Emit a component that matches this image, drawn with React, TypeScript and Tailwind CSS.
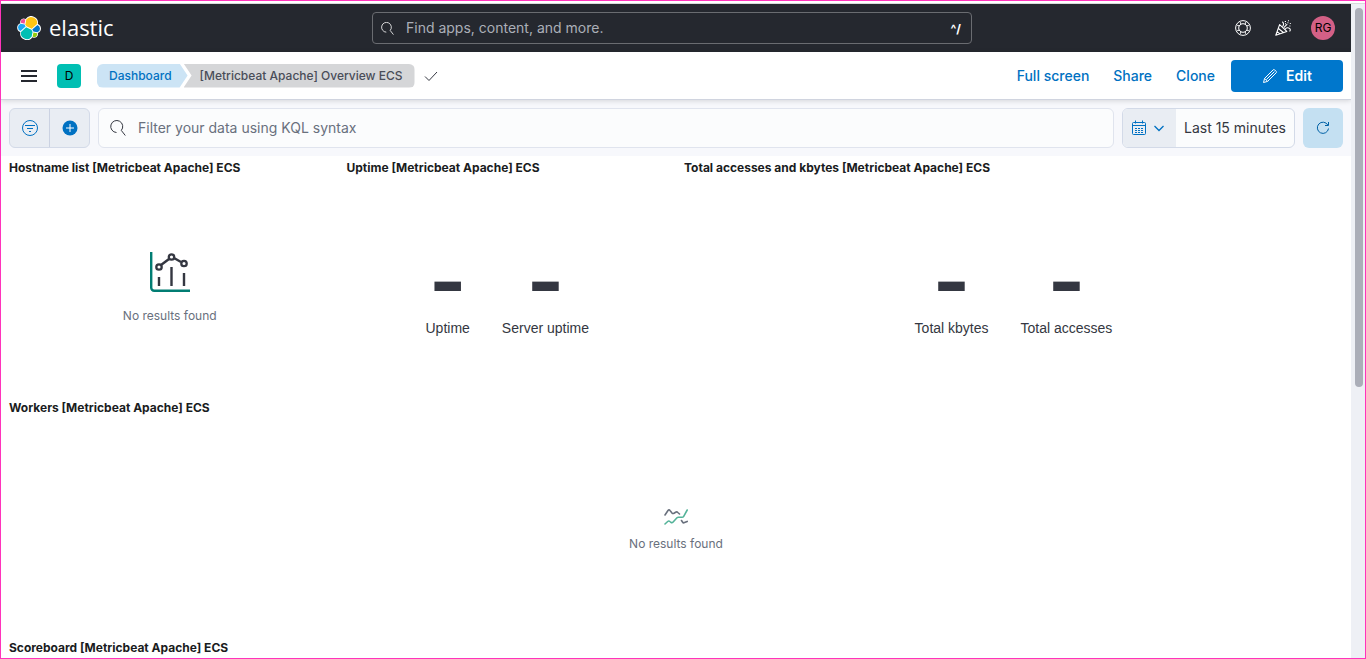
import type { ReactNode, SVGProps } from 'react';

function Icon({ children, ...rest }: SVGProps<SVGSVGElement> & { children: ReactNode }) {
  return (
    <svg width="16" height="16" viewBox="0 0 16 16" fill="none" stroke="currentColor" aria-hidden="true" {...rest}>
      {children}
    </svg>
  );
}

function SearchIcon({ size = 16 }: { size?: number }) {
  return (
    <Icon width={size} height={size}>
      <path d="M6.5 12.5A6 6 0 1 1 11.3 10.400L15.300 15.500" />
    </Icon>
  );
}

function ElasticMark() {
  return (
    <svg width="24" height="24" viewBox="0 0 32 32" aria-hidden="true">
      <path fill="#FFF" d="M32 16.77c0-2.68-1.66-5.02-4.16-5.94a9.03 9.03 0 0 0-16.3-6.79 4.78 4.78 0 0 0-7.1 5.47A6.38 6.38 0 0 0 .2 15.5c0 2.7 1.67 5.04 4.18 5.96a9 9 0 0 0 16.27 6.78 4.78 4.78 0 0 0 7.09-5.47A6.4 6.4 0 0 0 32 16.77" />
      <path fill="#FEC514" d="m12.58 13.79 7 3.2 7.07-6.2a7.9 7.9 0 0 0-14.24-6l-1.18 6.1z" />
      <path fill="#00BFB3" d="M5.33 21.22a7.9 7.9 0 0 0 14.27 6.08l1.17-6.07-1.56-2.98-7.03-3.2z" />
      <path fill="#F04E98" d="m5.29 9.08 4.8 1.14 1.05-5.46a3.8 3.8 0 0 0-5.85 4.32" />
      <path fill="#1BA9F5" d="M4.87 10.23a5.3 5.3 0 0 0-.15 9.93l6.73-6.09-1.23-2.64z" />
      <path fill="#93C90E" d="M20.87 27.3a3.77 3.77 0 0 0 5.83-4.31l-4.79-1.12z" />
      <path fill="#0077CC" d="m21.85 20.56 5.27 1.24a5.3 5.3 0 0 0 .15-9.94l-6.9 6.04z" />
    </svg>
  );
}

function TopBar() {
  return (
    <header className="flex h-12 items-center bg-[#25282f] pr-6 pl-4">
      <a href="#home" className="flex flex-1 items-center gap-2 text-white">
        <ElasticMark />
        <span className="pb-0.5 font-['Open_Sans',sans-serif] text-[22px] leading-6">elastic</span>
      </a>
      <label className="flex h-8 w-[600px] items-center gap-3 rounded-[4px] border border-[#6a6c71] px-2 text-white">
        <SearchIcon size={13} />
        <input
          type="search"
          aria-label="Find apps, content, and more"
          placeholder="Find apps, content, and more."
          className="min-w-0 flex-1 bg-transparent text-sm outline-none placeholder:text-[#abafb8]"
        />
        <kbd className="pt-0.5 pr-0.5 font-['Inter',sans-serif] text-xs font-bold">^/</kbd>
      </label>
      <div className="flex flex-1 items-center justify-end gap-6 text-white">
        <button aria-label="Help">
          <Icon>
            <circle cx="8" cy="8" r="7.4" />
            <circle cx="8" cy="8" r="4.3" />
            <path d="M2.200 5.300 4.500 6M5.300 2.200 6 4.500M10.700 2.200 10 4.500M13.800 5.300l-2.300.7M2.200 10.700l2.300-.7M5.300 13.800l.7-2.300M10.700 13.800l-.7-2.300M13.800 10.700l-2.300-.7" />
          </Icon>
        </button>
        <button aria-label="What's new">
          <Icon strokeWidth="1.1">
            <path d="M4.600 4.600.8 15.200l11-3.800zM3.400 8.500l5 4M2.200 11.700l2.700 2.200" strokeLinejoin="round" />
            <path d="M7.400 6.600C9 5.200 9 3 7.200 1.800M10 9.600c.8-2 3-2.600 4.800-1 .8.8.6 2.200-.4 2.600M8.800 7.600l3.400-3.400" />
            <path d="M9.800 1.500H11M13 .8h1M14.800 3.500h1M12.400 2.800h1M14.400 6h1M10 3.800h1" />
          </Icon>
        </button>
        <button aria-label="Account menu" className="-mr-2 -ml-1 flex size-6 items-center justify-center rounded-full bg-[#d36086] text-xs text-black">
          RG
        </button>
      </div>
    </header>
  );
}

function NavBar() {
  return (
    <nav className="relative z-10 flex h-12 items-center border-b border-[#d0d4df] bg-white pr-2 pl-5 shadow-[0_1px_5px_rgba(0,0,0,0.14)]">
      <button aria-label="Toggle navigation" className="text-[#25282f]">
        <Icon strokeWidth="2">
          <path d="M0 3h16M0 8h16M0 13h16" />
        </Icon>
      </button>
      <button aria-label="Default space" className="ml-5 flex size-6 items-center justify-center rounded-[4px] bg-[#00bfb3] text-xs text-black">
        D
      </button>
      <ol className="ml-4 flex text-xs leading-6 font-medium">
        <li className="rounded-l-md bg-[#cce4f5] pr-4 pl-3 text-[#0071c2] [clip-path:polygon(0_0,calc(100%-8px)_0,100%_50%,calc(100%-8px)_100%,0_100%)]">
          <a href="#dashboards">Dashboard</a>
        </li>
        <li className="-ml-1 rounded-r-md bg-[#d5d6d8] pr-3 pl-4 text-[#494d58] [clip-path:polygon(0_0,100%_0,100%_100%,0_100%,8px_50%)]">
          [Metricbeat Apache] Overview ECS
        </li>
      </ol>
      <Icon className="ml-2 text-[#343741]">
        <path d="m2 8.5 4 4 8-8.5" />
      </Icon>
      <div className="ml-auto flex items-center gap-6 text-sm font-medium text-[#0071c2]">
        <a href="#full-screen">Full screen</a>
        <a href="#share">Share</a>
        <a href="#clone">Clone</a>
      </div>
      <button className="ml-4 flex h-8 w-28 items-center justify-center gap-2 rounded-[4px] bg-[#0077cc] text-sm font-semibold text-white">
        <Icon>
          <path d="M1.500 14.500 2.600 10.400 11.200 1.800a1 1 0 0 1 1.400 0l1.600 1.600a1 1 0 0 1 0 1.400L5.600 13.400zM2.600 10.400l3 3M4.400 11.600l8-8" />
        </Icon>
        Edit
      </button>
    </nav>
  );
}

function FilterBar() {
  return (
    <div className="flex gap-2 bg-[#f7f8fc] p-2">
      <div className="flex h-10 w-[81px] divide-x divide-[#cbd2e2] overflow-hidden rounded-md border border-[#d3dae8] bg-[#e9edf3] text-[#0071c2]">
        <button aria-label="Saved queries" className="flex flex-1 items-center justify-center">
          <Icon>
            <circle cx="8" cy="8" r="7.5" />
            <path d="M3 5.500h10M5 8.500h6M7 11.500h2" />
          </Icon>
        </button>
        <button aria-label="Add filter" className="flex flex-1 items-center justify-center">
          <Icon>
            <circle cx="8" cy="8" r="7.5" fill="currentColor" stroke="none" />
            <path d="M4 8h8M8 4v8" stroke="#fff" />
          </Icon>
        </button>
      </div>
      <label className="flex h-10 flex-1 items-center gap-3 rounded-md border border-[#e0e4ee] bg-[#fbfcfd] px-[11px] text-[#343741]">
        <SearchIcon />
        <input
          type="search"
          aria-label="Query"
          placeholder="Filter your data using KQL syntax"
          className="min-w-0 flex-1 bg-transparent text-sm outline-none placeholder:text-[#69707d]"
        />
      </label>
      <div className="flex h-10 overflow-hidden rounded-md border border-[#d3dae8] bg-[#fbfcfd]">
        <button aria-label="Date quick select" className="flex w-[53px] items-center justify-center gap-1 bg-[#e9edf3] text-[#0071c2]">
          <Icon>
            <rect x="1.5" y="2.5" width="13" height="12" rx="1" />
            <path d="M1.500 5.500h13M4.500.5v3M11.500.5v3" />
            <path d="M4 8.500h8M4 10.500h8M4 12.500h8" strokeDasharray="2 1" />
          </Icon>
          <Icon>
            <path d="m3.500 6 4.500 4.500L12.500 6" strokeWidth="1.3" />
          </Icon>
        </button>
        <button className="px-2 text-sm text-[#343741]">Last 15 minutes</button>
      </div>
      <button aria-label="Refresh" className="flex size-10 items-center justify-center rounded-md bg-[#c4e0f2] text-[#0061a6]">
        <Icon>
          <path d="M12.800 5A5.600 5.600 0 1 0 13.500 8.500M13.500 2v3.500H10" />
        </Icon>
      </button>
    </div>
  );
}

function Panel({ title, className = '', children }: { title: string; className?: string; children?: ReactNode }) {
  return (
    <section className={`flex h-60 flex-col ${className}`}>
      <h2 className="px-2 text-xs leading-6 font-bold text-[#1a1c21]">{title}</h2>
      <div className="flex flex-1 items-center justify-center">{children}</div>
    </section>
  );
}

function Metric({ label }: { label: string }) {
  return (
    <div className="flex flex-col items-center px-4 text-[#343741]">
      <span className="pt-1.5 text-[80px] leading-[74px] font-bold">-</span>
      <span className="font-['Liberation_Sans',sans-serif] text-sm">{label}</span>
    </div>
  );
}

function BarsIcon() {
  return (
    <svg width="40" height="40" viewBox="0 0 40 40" fill="none" stroke="#343741" strokeWidth="2" aria-hidden="true">
      <path stroke="#017d73" strokeWidth="2.4" d="M1.200 0v35.800a3 3 0 0 0 3 3H40" />
      <path d="M9 25v9M21.500 15v19M34 21v13M11 13l8-6M24 6l7 4" strokeWidth="2.4" />
      <circle cx="9" cy="15" r="2.7" strokeWidth="2.3" />
      <circle cx="21.500" cy="5" r="2.7" strokeWidth="2.3" />
      <circle cx="34" cy="11.500" r="2.7" strokeWidth="2.3" />
    </svg>
  );
}

function LinesIcon() {
  return (
    <svg width="24" height="18" viewBox="0 0 24 18" fill="none" strokeWidth="1.6" strokeLinecap="round" strokeLinejoin="round" aria-hidden="true">
      <path stroke="#69707d" d="M1 7 4 2.500c.6-.8 1.400-.8 2 0L8 5c.6.7 1.200.7 2 .2l1.600-1c.8-.5 1.600-.4 2.200.3L15.500 6M17.500 12.500l1 1.500c.5.8 1.200 1 2 .6l2.700-1.200" />
      <path stroke="#54b399" d="m1 16 2.700-2.500c.7-.6 1.500-.6 2.200 0l1 .8c.7.5 1.400.5 2-.1L13 9.800c.4-.4.8-.5 1.400-.5H18c.8 0 1.300-.3 1.700-1L23.200 2" />
    </svg>
  );
}

export default function App() {
  return (
    <div className="flex h-screen flex-col border border-[#ff33bb] bg-white pt-0.5 font-['Inter',sans-serif]">
      <div className="flex min-h-0 flex-1 border-t border-[#d9d9dc]">
        <div className="flex min-w-0 flex-1 flex-col overflow-hidden">
          <div className="shrink-0">
            <TopBar />
            <NavBar />
            <FilterBar />
          </div>
          <main className="grid shrink-0 grid-cols-4">
            <Panel title="Hostname list [Metricbeat Apache] ECS">
              <div className="flex flex-col items-center gap-4 text-xs text-[#69707d]">
                <BarsIcon />
                No results found
              </div>
            </Panel>
            <Panel title="Uptime [Metricbeat Apache] ECS">
              <Metric label="Uptime" />
              <Metric label="Server uptime" />
            </Panel>
            <Panel title="Total accesses and kbytes [Metricbeat Apache] ECS" className="col-span-2">
              <Metric label="Total kbytes" />
              <Metric label="Total accesses" />
            </Panel>
            <Panel title="Workers [Metricbeat Apache] ECS" className="col-span-4">
              <div className="flex flex-col items-center gap-2.5 pt-1 text-xs text-[#69707d]">
                <LinesIcon />
                No results found
              </div>
            </Panel>
            <Panel title="Scoreboard [Metricbeat Apache] ECS" className="col-span-4" />
          </main>
        </div>
        <div className="w-[14px] bg-[#eef0f5] px-1 pt-1" aria-hidden="true">
          <div className="h-7/12 w-2 rounded-full bg-[#abaeb8]" />
        </div>
      </div>
    </div>
  );
}
